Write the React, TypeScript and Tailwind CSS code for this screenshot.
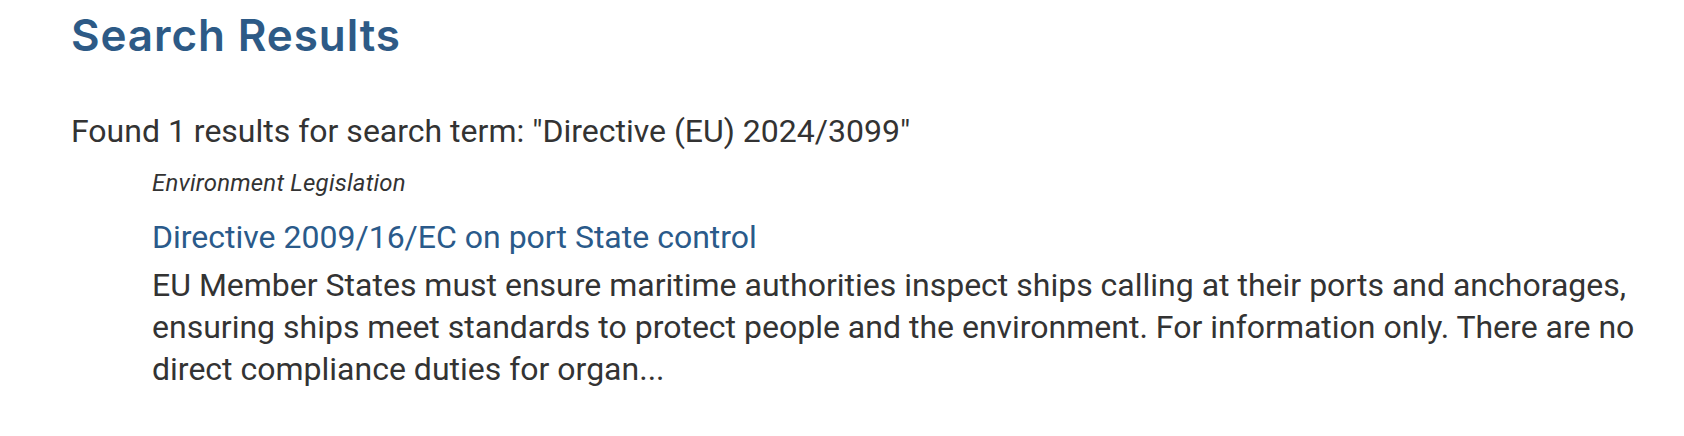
export default function App() {
  return (
    <div className="min-h-screen bg-white pl-[71px] pr-[24px] pt-[9px] font-['Roboto',sans-serif] text-[#333333]">
      <h1 className="font-['Inter',sans-serif] text-[44px] font-semibold leading-[52px] tracking-[0.9px] text-[#2d5a86]">
        Search Results
      </h1>

      <p className="mt-[49px] text-[32px] leading-[42px]">
        Found 1 results for search term: "Directive (EU) 2024/3099"
      </p>

      <div className="pl-[81px]">
        <p className="mt-[15px] text-[24px] italic leading-[32px] tracking-[0.2px]">
          Environment Legislation
        </p>
        <a href="#" className="mt-[17px] block text-[32px] leading-[42px] text-[#2a5a8a]">
          Directive 2009/16/EC on port State control
        </a>
        <p className="mt-[6px] text-[32px] leading-[42px]">
          EU Member States must ensure maritime authorities inspect ships calling at their ports
          and anchorages, ensuring ships meet standards to protect people and the environment. For
          information only. There are no direct compliance duties for organ...
        </p>
      </div>
    </div>
  );
}
